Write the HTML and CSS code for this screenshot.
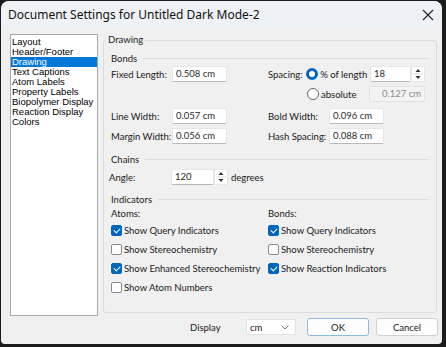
FILE: index.html
```html
<!DOCTYPE html>
<html lang="en">
<head>
  <meta charset="UTF-8" />
  <title>Document Settings</title>
  <link rel="stylesheet" href="styles.css">
</head>
<body>
  <div class="window">
    <div class="titlebar">
      <span class="title">Document Settings for Untitled Dark Mode-2</span>
      <svg class="close" width="12" height="12" viewBox="0 0 12 12"><path d="M1 1 L11 11 M11 1 L1 11" stroke="#222" stroke-width="1.1" fill="none"/></svg>
    </div>

    <div class="content">
      <ul class="listbox">
        <li>Layout</li>
        <li>Header/Footer</li>
        <li class="selected">Drawing</li>
        <li>Text Captions</li>
        <li>Atom Labels</li>
        <li>Property Labels</li>
        <li>Biopolymer Display</li>
        <li>Reaction Display</li>
        <li>Colors</li>
      </ul>

      <fieldset class="group">
        <legend>Drawing</legend>

        <div class="section-head bonds"><span>Bonds</span><i></i></div>

        <div class="row first">
          <div class="half">
            <label class="lbl">Fixed Length:</label>
            <div class="input">0.508 cm</div>
          </div>
          <div class="half">
            <label class="lbl short">Spacing:</label>
            <span class="radio on"></span><span class="opt">% of length</span>
            <div class="input num">18</div>
            <div class="spin">
              <svg width="14" height="16" viewBox="0 0 14 16"><path d="M4.5 6 L7 3 L9.5 6 Z M4.5 10 L7 13 L9.5 10 Z" fill="#333"/><path d="M2 8 H12" stroke="#ddd"/></svg>
            </div>
          </div>
        </div>

        <div class="row">
          <div class="half"></div>
          <div class="half">
            <span class="radio off indent"></span><span class="opt">absolute</span>
            <div class="input disabled">0.127 cm</div>
          </div>
        </div>

        <div class="row gap-top">
          <div class="half">
            <label class="lbl">Line Width:</label>
            <div class="input">0.057 cm</div>
          </div>
          <div class="half">
            <label class="lbl">Bold Width:</label>
            <div class="input">0.096 cm</div>
          </div>
        </div>

        <div class="row">
          <div class="half">
            <label class="lbl">Margin Width:</label>
            <div class="input">0.056 cm</div>
          </div>
          <div class="half">
            <label class="lbl">Hash Spacing:</label>
            <div class="input">0.088 cm</div>
          </div>
        </div>

        <div class="section-head chains"><span>Chains</span><i></i></div>

        <div class="row angle-row">
          <label class="lbl angle">Angle:</label>
          <div class="input angle-in">120</div>
          <div class="spin">
            <svg width="14" height="16" viewBox="0 0 14 16"><path d="M4.5 6 L7 3 L9.5 6 Z M4.5 10 L7 13 L9.5 10 Z" fill="#333"/><path d="M2 8 H12" stroke="#ddd"/></svg>
          </div>
          <span class="unit">degrees</span>
        </div>

        <div class="section-head indicators"><span>Indicators</span><i></i></div>

        <div class="checks">
          <div class="col">
            <div class="col-title">Atoms:</div>
            <div class="check"><span class="box on"></span>Show Query Indicators</div>
            <div class="check"><span class="box"></span>Show Stereochemistry</div>
            <div class="check"><span class="box on"></span>Show Enhanced Stereochemistry</div>
            <div class="check"><span class="box"></span>Show Atom Numbers</div>
          </div>
          <div class="col">
            <div class="col-title">Bonds:</div>
            <div class="check"><span class="box on"></span>Show Query Indicators</div>
            <div class="check"><span class="box"></span>Show Stereochemistry</div>
            <div class="check"><span class="box on"></span>Show Reaction Indicators</div>
          </div>
        </div>
      </fieldset>
    </div>

    <div class="footer">
      <span class="display">Display</span>
      <div class="select">cm <svg width="8" height="5" viewBox="0 0 8 5"><path d="M0.5 0.5 L4 4 L7.5 0.5" stroke="#777" fill="none"/></svg></div>
      <button class="btn ok">OK</button>
      <button class="btn">Cancel</button>
    </div>
  </div>
</body>
</html>
```

FILE: styles.css
```css
:root {
  --accent: #0067c0;
  --face: #f0f0f0;
  --line: #dcdcdc;
  --font: Lato, 'Noto Sans', sans-serif;
}

* {
  box-sizing: border-box;
  margin: 0;
  padding: 0;
}

body {
  background: #1c1c1c;
  padding: 1px;
  font-family: var(--font);
  font-size: 9.5px;
  color: #1a1a1a;
}

.window {
  width: 441px;
  height: 343px;
  background: var(--face);
  border-radius: 8px 8px 4px 4px;
  overflow: hidden;
  display: flex;
  flex-direction: column;
}

.titlebar {
  height: 27px;
  background: #eef1f6;
  display: flex;
  align-items: center;
  justify-content: space-between;
  padding: 0 8px 0 7px;
}

.title {
  font-family: 'Noto Sans', sans-serif;
  font-size: 12px;
  color: #111;
}

.content {
  display: flex;
  padding: 6px 0 0 9px;
  gap: 5px;
}

.listbox {
  list-style: none;
  width: 88px;
  height: 282px;
  background: #fff;
  border: 1px solid #a8a8a8;
  font-family: 'Liberation Sans', Arial, sans-serif;
  font-size: 9.5px;
  color: #000;
}

.listbox li {
  height: 10px;
  line-height: 10px;
  padding-left: 1px;
  white-space: nowrap;
}

.listbox li:first-child {
  margin-top: 2px;
}

.listbox li.selected {
  background: #0078d7;
  color: #fff;
}

.group {
  width: 334px;
  height: 279px;
  border: 1px solid var(--line);
  border-radius: 3px;
  padding: 0 0 0 7px;
}

.group legend {
  margin-left: -5px;
  padding: 0 2px;
  height: 12px;
  line-height: 12px;
}

.section-head {
  display: flex;
  align-items: center;
  gap: 6px;
  height: 12px;
  margin-right: 7px;
}

.section-head i {
  flex: 1;
  height: 1px;
  background: var(--line);
}

.section-head.bonds {
  margin-top: 6px;
}

.row {
  display: flex;
  align-items: center;
  height: 16px;
  margin-top: 4px;
}

.row.first {
  margin-top: 2px;
}

.row.gap-top {
  margin-top: 6px;
}

.half {
  display: flex;
  align-items: center;
  width: 157px;
}

.lbl {
  width: 61px;
  white-space: nowrap;
}

.lbl.short {
  width: 39px;
}

.input {
  width: 55px;
  height: 16px;
  background: #fff;
  border: 1px solid #e6e6e6;
  border-bottom-color: #b8b8b8;
  border-radius: 2px;
  padding: 0 3px;
  line-height: 14px;
  color: #2a2a2a;
  white-space: nowrap;
}

.input.num {
  width: 42px;
}

.input.disabled {
  width: 58px;
  background: #f3f3f3;
  border-color: #e2e2e2;
  color: #8a8a8a;
  text-align: right;
}

.radio {
  width: 12px;
  height: 12px;
  border-radius: 50%;
  margin-right: 2px;
  flex: none;
}

.radio.on {
  border: 3.5px solid var(--accent);
  background: #fff;
}

.radio.off {
  border: 1px solid #6a6a6a;
  background: #fff;
}

.radio.indent {
  margin-left: 39px;
}

.opt {
  width: 49px;
  margin-right: 2px;
  white-space: nowrap;
}

.row .half .opt + .disabled {
  margin-left: -2px;
}

.spin {
  width: 14px;
  height: 16px;
  background: #fff;
  border: 1px solid #e6e6e6;
  border-radius: 2px;
  display: flex;
  align-items: center;
  justify-content: center;
  overflow: hidden;
}

.spin svg {
  flex: none;
}

.chains {
  margin-top: 9px;
}

.angle-row {
  margin-left: -2px;
}

.lbl.angle {
  width: 62px;
}

.input.angle-in {
  width: 43px;
}

.unit {
  margin-left: 3px;
}

.indicators {
  margin-top: 8px;
}

.checks {
  display: flex;
  margin-top: 3px;
}

.col {
  width: 157px;
}

.col-title {
  height: 12px;
  line-height: 12px;
  margin-bottom: 1px;
}

.check {
  display: flex;
  align-items: center;
  height: 19px;
  white-space: nowrap;
  gap: 2px;
}

.box {
  width: 11px;
  height: 11px;
  border: 1px solid #8a8a8a;
  border-radius: 2px;
  background: #fff;
  flex: none;
}

.box.on {
  background: var(--accent);
  border-color: var(--accent);
  position: relative;
}

.box.on::after {
  content: "";
  position: absolute;
  left: 3px;
  top: 1px;
  width: 3px;
  height: 5px;
  border: solid #fff;
  border-width: 0 1px 1px 0;
  transform: rotate(45deg);
}

.footer {
  display: flex;
  align-items: center;
  height: 18px;
  margin-top: 2px;
  padding-left: 189px;
}

.display {
  width: 56px;
}

.select {
  width: 50px;
  height: 16px;
  background: #fff;
  border: 1px solid #e2e2e2;
  border-radius: 2px;
  display: flex;
  align-items: center;
  justify-content: space-between;
  padding: 0 6px 0 3px;
}

.btn {
  height: 18px;
  width: 62px;
  margin-left: 11px;
  background: #fdfdfd;
  border: 1px solid #d0d0d0;
  border-radius: 3px;
  font-family: var(--font);
  font-size: 9.5px;
  color: #1a1a1a;
}

.btn + .btn {
  margin-left: 7px;
}

.btn.ok {
  border-color: #8fb8e0;
}
```
